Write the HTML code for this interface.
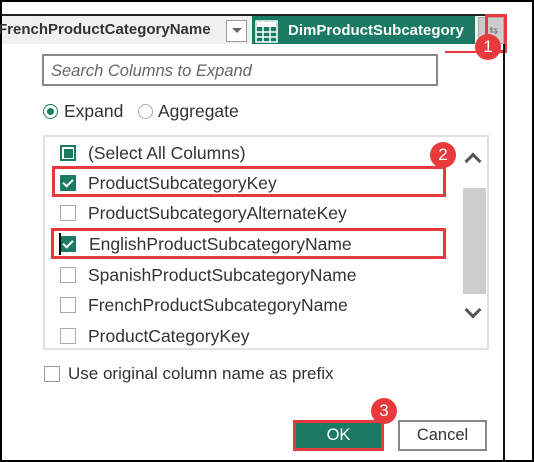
<!DOCTYPE html>
<html><head><style>
*{box-sizing:border-box;margin:0;padding:0}
body{width:534px;height:462px;overflow:hidden;background:#fff;font-family:"Liberation Sans",sans-serif;position:relative}
.a{position:absolute}
.row{position:absolute;left:60px;font-size:17.5px;color:#333;height:20px;line-height:20px}
.cb{position:absolute;left:0;top:2px;width:16px;height:16px;border:1.5px solid #aaa;background:#fff}
.cb.on{background:#1a7a64;border-color:#1a7a64}
.cb.on:after{content:"";position:absolute;left:4px;top:1px;width:4px;height:8px;border:solid #fff;border-width:0 2px 2px 0;transform:rotate(45deg)}
.row span{position:absolute;left:28px;white-space:nowrap}
.badge{position:absolute;width:26px;height:26px;border-radius:50%;background:#e8393c;color:#fff;font-size:17px;text-align:center;line-height:26px}
.red{position:absolute;border:3px solid #e8393c}
</style></head><body>
<div class="a" style="left:0;top:0;width:534px;height:462px;border:2px solid #000"></div>
<div class="a" style="left:2px;top:14px;width:501px;height:30px;background:#f0f0f0;border-top:2px solid #222"></div>
<div class="a" style="left:-2px;top:21px;font-weight:bold;font-size:15px;color:#333">FrenchProductCategoryName</div>
<div class="a" style="left:226px;top:20px;width:21px;height:22px;border:1px solid #999;background:#fff"></div>
<div class="a" style="left:232px;top:28px;border-left:5px solid transparent;border-right:5px solid transparent;border-top:5px solid #666"></div>
<div class="a" style="left:252px;top:16px;width:223px;height:28px;background:#1a7a64"></div>
<svg class="a" style="left:255px;top:20px" width="23" height="23"><rect x="1" y="1" width="21" height="21" fill="none" stroke="#fff" stroke-width="1.5"/><rect x="2" y="2" width="19" height="5" fill="#fff"/><path d="M1 12H22M1 17H22M8 1V22M15 1V22" stroke="#fff" stroke-width="1.5"/></svg>
<div class="a" style="left:288px;top:22px;font-weight:bold;font-size:15px;color:#fff">DimProductSubcategory</div>
<div class="a" style="left:478px;top:17px;width:26px;height:27px;background:#ccc;border:1px solid #aaa"></div>
<div class="a" style="left:489px;top:24px;font-size:11px;color:#777">⇆</div>
<div class="red" style="left:485px;top:14px;width:22px;height:39px"></div>
<div class="a" style="left:445px;top:51px;width:40px;height:2px;background:#e8393c"></div>
<div class="badge" style="left:475px;top:34px">1</div>
<div class="a" style="left:503px;top:44px;width:2px;height:416px;background:#111"></div>
<div class="a" style="left:42px;top:54px;width:396px;height:32px;border:2px solid #888"></div>
<div class="a" style="left:51px;top:62px;font-size:16.5px;font-style:italic;color:#666">Search Columns to Expand</div>
<div class="a" style="left:43px;top:104px;width:15px;height:15px;border-radius:50%;border:1.5px solid #1a7a64"></div>
<div class="a" style="left:47px;top:108px;width:7px;height:7px;border-radius:50%;background:#1a7a64"></div>
<div class="a" style="left:64px;top:101px;font-size:17.5px;color:#333">Expand</div>
<div class="a" style="left:138px;top:104px;width:15px;height:15px;border-radius:50%;border:1.5px solid #aaa"></div>
<div class="a" style="left:158px;top:101px;font-size:17.5px;color:#333">Aggregate</div>
<div class="a" style="left:43px;top:135px;width:446px;height:215px;border:2px solid #dde2e2"></div>
<div class="a" style="left:462px;top:137px;width:25px;height:211px;background:#fff"></div>
<div class="a" style="left:463px;top:188px;width:23px;height:106px;background:#cdcdcd"></div>
<div class="a" style="left:467px;top:155px;width:12px;height:12px;border-left:3px solid #555;border-top:3px solid #555;transform:rotate(45deg)"></div>
<div class="a" style="left:467px;top:304px;width:12px;height:12px;border-right:3px solid #555;border-bottom:3px solid #555;transform:rotate(45deg)"></div>
<div class="row" style="top:143px"><div class="cb" style="border:2px solid #1a7a64"><div style="position:absolute;left:2px;top:2px;width:9px;height:9px;background:#1a7a64"></div></div><span>(Select All Columns)</span></div>
<div class="row" style="top:173px"><div class="cb on"></div><span>ProductSubcategoryKey</span></div>
<div class="row" style="top:203px"><div class="cb"></div><span>ProductSubcategoryAlternateKey</span></div>
<div class="row" style="top:234px"><div class="cb on"></div><span style="left:29px">EnglishProductSubcategoryName</span></div>
<div class="a" style="left:59px;top:233px;width:2px;height:22px;background:#000"></div>
<div class="row" style="top:265px"><div class="cb"></div><span>SpanishProductSubcategoryName</span></div>
<div class="row" style="top:295px"><div class="cb"></div><span>FrenchProductSubcategoryName</span></div>
<div class="row" style="top:326px"><div class="cb"></div><span>ProductCategoryKey</span></div>
<div class="red" style="left:52px;top:166px;width:394px;height:31px"></div>
<div class="red" style="left:51px;top:228px;width:395px;height:31px"></div>
<div class="badge" style="left:430px;top:142px">2</div>
<div class="a" style="left:44px;top:366px;width:16px;height:16px;border:1.5px solid #999"></div>
<div class="a" style="left:68px;top:364px;font-size:17px;color:#333">Use original column name as prefix</div>
<div class="a" style="left:293px;top:420px;width:91px;height:31px;background:#1a7a64;border:3px solid #e8393c;color:#fff;font-size:16.5px;text-align:center;line-height:25px">OK</div>
<div class="a" style="left:398px;top:420px;width:89px;height:31px;border:2px solid #888;color:#333;font-size:16.5px;text-align:center;line-height:27px">Cancel</div>
<div class="badge" style="left:371px;top:398px">3</div>
</body></html>
